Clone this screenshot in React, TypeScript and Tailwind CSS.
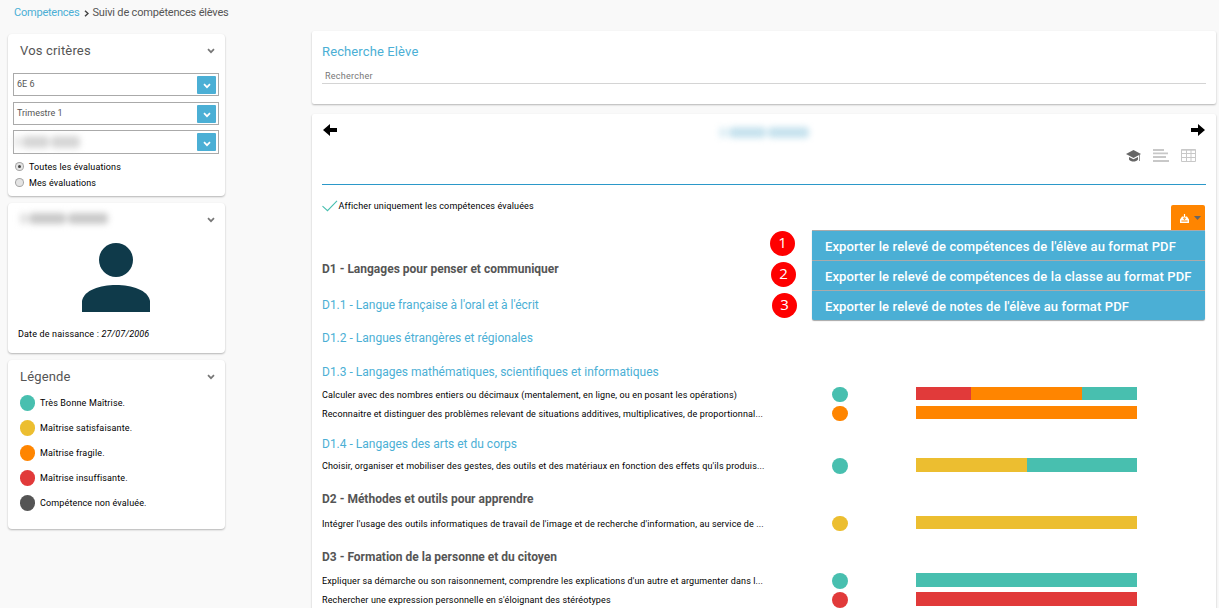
import React from 'react';

const TEAL = 'bg-[#48bfaf]';
const YELLOW = 'bg-[#ecbe30]';
const ORANGE = 'bg-[#ff8500]';
const RED = 'bg-[#e13a3a]';
const GRAY = 'bg-[#555555]';

function Chevron({ className }: { className: string }) {
  return (
    <svg viewBox="0 0 8 6" className={className} fill="none" stroke="currentColor" strokeWidth="1.7">
      <path d="M1 1.2 L4 4.2 L7 1.2" />
    </svg>
  );
}

function Smudge({ className }: { className: string }) {
  return (
    <div aria-hidden="true" className={`flex items-center gap-[2px] blur-[3px] ${className}`}>
      <i className="h-full w-1/12 rounded bg-current opacity-60" />
      <i className="h-full w-5/12 rounded bg-current" />
      <i className="h-full flex-1 rounded bg-current" />
    </div>
  );
}

function Card({ className, children }: { className: string; children: React.ReactNode }) {
  return (
    <section className={`rounded bg-white shadow-[0_1px_2px_rgba(0,0,0,0.28)] ${className}`}>{children}</section>
  );
}

function CardHeader({ title }: { title?: string }) {
  return (
    <header className="flex h-8 items-center justify-between pl-3 pr-[10px]">
      {title ? (
        <h2 className="pt-px text-[13px] tracking-[0.17px] text-[#555]">{title}</h2>
      ) : (
        <Smudge className="-mt-[2px] h-[11px] w-[88px] text-[#c9c9c9]" />
      )}
      <Chevron className="mt-px h-[6px] w-2 text-[#777]" />
    </header>
  );
}

function SelectBox({ value, className }: { value?: string; className: string }) {
  return (
    <div className={`flex w-[206px] items-center justify-between border border-[#aaa] pl-[3px] pr-[2px] ${className}`}>
      {value ? (
        <span className="text-[9px] text-[#555]">{value}</span>
      ) : (
        <Smudge className="-ml-[3px] h-[12px] w-[66px] text-[#d6d6d6]" />
      )}
      <span className="flex h-[18px] w-[19px] items-center justify-center rounded-[1px] bg-[#4bafd5] pt-[3px] text-white">
        <Chevron className="h-[6px] w-2" />
      </span>
    </div>
  );
}

function Radio({ label, checked }: { label: string; checked?: boolean }) {
  return (
    <label className="flex h-4 items-center">
      <span className="-mt-[2px] flex size-[7px] items-center justify-center rounded-full bg-[#e4e4e4] ring-1 ring-[#a5a5a5]">
        {checked && <i className="size-[3px] rounded-full bg-[#444]" />}
      </span>
      <span className="ml-[6px] pt-px text-[9px] tracking-[0.12px]">{label}</span>
    </label>
  );
}

const legend = [
  { color: TEAL, label: 'Très Bonne Maîtrise.' },
  { color: YELLOW, label: 'Maîtrise satisfaisante.' },
  { color: ORANGE, label: 'Maîtrise fragile.' },
  { color: RED, label: 'Maîtrise insuffisante.' },
  { color: GRAY, label: 'Compétence non évaluée.' },
];

function Domain({ children, className }: { children: string; className: string }) {
  return (
    <h3 className={`flex h-5 items-center text-[12px] font-bold text-[#555] ${className}`}>{children}</h3>
  );
}

function SubDomain({ children, className }: { children: string; className: string }) {
  return (
    <h4 className={`flex h-5 items-center text-[12px] text-[#4bafd5] ${className}`}>{children}</h4>
  );
}

type Segment = { color: string; share: number };

function Skill({
  text,
  dot,
  segments,
  tall,
  className = '',
}: {
  text: string;
  dot: string;
  segments: Segment[];
  tall?: boolean;
  className?: string;
}) {
  return (
    <div className={`flex h-[19px] items-start ${className}`}>
      <p className="w-[510px] whitespace-nowrap text-[9px] leading-[21px] tracking-[0.13px] text-black">{text}</p>
      <i className={`mt-[2px] w-4 rounded-full ${tall ? 'h-4' : 'h-[15px]'} ${dot}`} />
      <div className={`ml-[68px] mt-[2px] flex w-[221px] ${tall ? 'h-[14px]' : 'h-[13px]'}`}>
        {segments.map((s, i) => (
          <i key={i} className={s.color} style={{ width: s.share }} />
        ))}
      </div>
    </div>
  );
}

const exportItems = [
  "Exporter le relevé de compétences de l'élève au format PDF",
  'Exporter le relevé de compétences de la classe au format PDF',
  "Exporter le relevé de notes de l'élève au format PDF",
];

function Marker({ n, className }: { n: number; className: string }) {
  return (
    <span
      className={`absolute flex size-[25px] items-center justify-center rounded-full bg-[#fe0000] pb-[2px] font-['Open_Sans',sans-serif] text-[15px] leading-none text-white ${className}`}
    >
      {n}
    </span>
  );
}

function Arrow({ className }: { className: string }) {
  return (
    <svg viewBox="0 0 14 12" className={`h-3 w-[14px] ${className}`} fill="#000">
      <path d="M0 6 L7 0 V4 H14 V8 H7 V12 Z" />
    </svg>
  );
}

function ExportMenu() {
  return (
    <div className="absolute right-[11px] top-[91px] flex flex-col items-end">
      <button className="flex h-[26px] w-[34px] items-center justify-center gap-[5px] rounded-t-[2px] bg-[#ff8500] pl-[4px]">
        <svg viewBox="0 0 9 9" className="size-[9px]" fill="#fff">
          <path d="M3.9 0 H5.1 V3 H3.9 Z" />
          <path fillRule="evenodd" d="M2 2.5 H3.6 V3.6 H5.4 V2.5 H7 L9 5.5 V9 H0 V5.5 Z M2.8 4.2 L4.5 5.9 L6.2 4.2 Z M1.4 6.6 V7.4 H7.6 V6.6 Z" />
        </svg>
        <svg viewBox="0 0 7 4" className="h-1 w-[7px]" fill="#666">
          <path d="M0 0 H7 L3.5 4 Z" />
        </svg>
      </button>
      <ul className="-mt-px w-[393px] rounded-b-[2px] bg-[#4bafd5] shadow-[0_1px_1px_rgba(0,0,0,0.35)]">
        {exportItems.map((item) => (
          <li
            key={item}
            className="flex h-[30px] items-center whitespace-nowrap border-t border-[#aaa] pl-[13px] pt-[3px] text-[13px] font-medium tracking-[0.12px] text-white"
          >
            {item}
          </li>
        ))}
      </ul>
      <Marker n={1} className="-left-[42px] top-[26px]" />
      <Marker n={2} className="-left-[41px] top-[57px]" />
      <Marker n={3} className="-left-[40px] top-[88px]" />
    </div>
  );
}

export default function App() {
  return (
    <div className="h-[608px] w-[1219px] overflow-hidden bg-[#f9f9f9] font-[Roboto,sans-serif] text-black">
      <nav className="flex h-[25px] items-center pl-[14px] pt-px text-[11px] text-[#555]">
        <a className="tracking-[-0.22px] text-[#4bafd5]">Competences</a>
        <svg viewBox="0 0 5 7" className="ml-[5px] mr-[3px] mt-px h-[7px] w-[5px]" fill="none" stroke="#444" strokeWidth="1.5">
          <path d="M1 0.7 L4 3.5 L1 6.3" />
        </svg>
        <span className="tracking-[-0.18px]">Suivi de compétences élèves</span>
      </nav>

      <div className="flex">
        <aside className="ml-2 mt-[9px] flex w-[217px] shrink-0 flex-col gap-[7px]">
          <Card className="h-[162px]">
            <CardHeader title="Vos critères" />
            <div className="flex flex-col pl-[5px] pt-[7px]">
              <SelectBox value="6E 6" className="h-[23px]" />
              <SelectBox value="Trimestre 1" className="mt-[6px] h-[23px]" />
              <SelectBox className="mt-[5px] h-6" />
            </div>
            <div className="pl-2 pt-[5px]">
              <Radio label="Toutes les évaluations" checked />
              <Radio label="Mes évaluations" />
            </div>
          </Card>

          <Card className="h-[150px]">
            <CardHeader />
            <svg viewBox="0 0 68 69" className="ml-[74px] mt-2 h-[69px] w-[68px]" fill="#0f3a4a">
              <circle cx="34" cy="17" r="17" />
              <path d="M0 69 V58 C2 47 18 42 34 42 C50 42 66 47 68 58 V69 Z" />
            </svg>
            <p className="mt-[15px] pl-[10px] text-[9px] leading-[14px] tracking-[0.16px]">
              Date de naissance : <em>27/07/2006</em>
            </p>
          </Card>

          <Card className="h-[169px]">
            <CardHeader title="Légende" />
            <ul className="pl-3 pt-[3px]">
              {legend.map((l) => (
                <li key={l.label} className="mb-[9px] flex h-4 items-center gap-[5px] text-[9px] tracking-[0.14px]">
                  <i className={`h-4 w-[15px] rounded-full ${l.color}`} />
                  <span className="pt-px">{l.label}</span>
                </li>
              ))}
            </ul>
          </Card>
        </aside>

        <main className="ml-[87px] mt-[6px] flex w-[904px] shrink-0 flex-col gap-[10px]">
          <Card className="h-[73px] rounded-[2px] px-[10px] pt-[13px]">
            <h2 className="text-[13px] leading-4 tracking-[0.12px] text-[#4bafd5]">Recherche Elève</h2>
            <div className="mt-2 h-4 border-b border-[#d4d4d4] pl-[3px] text-[9px] leading-4 tracking-[0.25px] text-[#777]">
              Rechercher
            </div>
          </Card>

          <Card className="relative h-[520px] rounded-[2px] px-[10px]">
            <div className="flex h-8 items-center justify-between pl-px">
              <Arrow className="" />
              <Smudge className="mt-1 h-[11px] w-[90px] text-[#c6e2ee]" />
              <Arrow className="mr-px -scale-x-100" />
            </div>
            <div className="flex h-[39px] items-start justify-end gap-[13px] border-b border-[#2b98c9] pr-[10px] pt-[3px]">
              <svg viewBox="0 0 15 12" className="mr-[-1px] mt-px h-3 w-[15px]" fill="#666">
                <path d="M7.5 0 L15 4 L7.5 8 L0 4 Z" />
                <path d="M3 7 L7.5 9.3 L12 7 V9.5 C10 12.3 5 12.3 3 9.5 Z" />
                <path d="M13.3 4.5 H14 V11 H13.3 Z" />
              </svg>
              <svg viewBox="0 0 16 13" className="mr-[-1px] h-[13px] w-4" fill="#c8c8c8">
                <path d="M0 0 H11 V2 H0 Z M0 3.5 H15 V5.3 H0 Z M0 7 H13 V9 H0 Z M0 11 H16 V13 H0 Z" />
              </svg>
              <svg viewBox="0 0 15 13" className="h-[13px] w-[15px]" fill="none" stroke="#c8c8c8">
                <path d="M0.5 0.5 H14.5 V12.5 H0.5 Z M0 1.2 H15 M0 4.5 H15 M0 8.5 H15 M5.5 1 V12 M10 1 V12" />
              </svg>
            </div>
            <div className="mt-3 flex h-5 items-center text-[9px] tracking-[0.13px]">
              <svg viewBox="0 0 16 12" className="-mt-[2px] h-3 w-4" fill="none" stroke="#48bfaf" strokeWidth="1.1">
                <path d="M0.5 6.2 L5.5 10.7 L15 0.8" />
              </svg>
              <span className="ml-[0.5px]">Afficher uniquement les compétences évaluées</span>
            </div>

            <Domain className="mt-[42px]">D1 - Langages pour penser et communiquer</Domain>
            <SubDomain className="mt-4">D1.1 - Langue française à l'oral et à l'écrit</SubDomain>
            <SubDomain className="mt-[13px]">D1.2 - Langues étrangères et régionales</SubDomain>
            <SubDomain className="mt-[14px]">D1.3 - Langages mathématiques, scientifiques et informatiques</SubDomain>
            <Skill
              className="mt-[3px]"
              text="Calculer avec des nombres entiers ou décimaux (mentalement, en ligne, ou en posant les opérations)"
              dot={TEAL}
              segments={[
                { color: RED, share: 55 },
                { color: ORANGE, share: 111 },
                { color: TEAL, share: 55 },
              ]}
            />
            <Skill
              text="Reconnaitre et distinguer des problèmes relevant de situations additives, multiplicatives, de proportionnal..."
              dot={ORANGE}
              segments={[{ color: ORANGE, share: 221 }]}
            />
            <SubDomain className="mt-[11px]">D1.4 - Langages des arts et du corps</SubDomain>
            <Skill
              className="mt-[2px]"
              tall
              text="Choisir, organiser et mobiliser des gestes, des outils et des matériaux en fonction des effets qu'ils produis..."
              dot={TEAL}
              segments={[
                { color: YELLOW, share: 111 },
                { color: TEAL, share: 110 },
              ]}
            />
            <Domain className="mt-[14px]">D2 - Méthodes et outils pour apprendre</Domain>
            <Skill
              className="mt-[5px]"
              text="Intégrer l'usage des outils informatiques de travail de l'image et de recherche d'information, au service de ..."
              dot={YELLOW}
              segments={[{ color: YELLOW, share: 221 }]}
            />
            <Domain className="mt-[14px]">D3 - Formation de la personne et du citoyen</Domain>
            <Skill
              className="mt-1"
              tall
              text="Expliquer sa démarche ou son raisonnement, comprendre les explications d'un autre et argumenter dans l..."
              dot={TEAL}
              segments={[{ color: TEAL, share: 221 }]}
            />
            <Skill
              tall
              text="Rechercher une expression personnelle en s'éloignant des stéréotypes"
              dot={RED}
              segments={[{ color: RED, share: 221 }]}
            />
            <ExportMenu />
          </Card>
        </main>
      </div>
    </div>
  );
}
